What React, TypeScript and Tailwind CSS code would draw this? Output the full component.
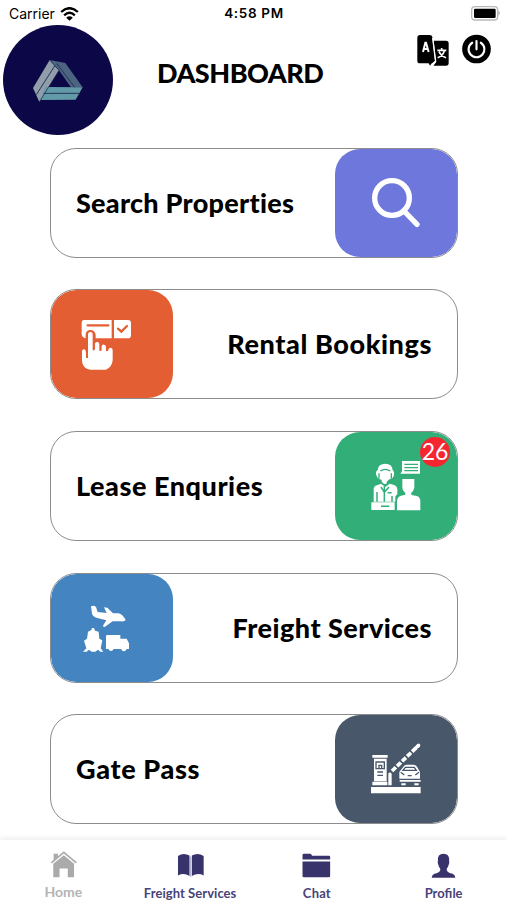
import type { ReactNode } from "react";

function Logo() {
  return (
    <svg viewBox="10 75 330 330" className="mt-[25px] ml-[3px] h-[110px] w-[110px] shrink-0">
      <circle cx="175" cy="240" r="165" fill="#0c0848" />
      <path d="M150 180L100 264L119 306L178 211Z" fill="#929daa" />
      <path d="M150 180L197 189L249 262L214 262L178 211Z" fill="#4c647f" />
      <path d="M138 261L249 262L228 299L121 300Z" fill="#629ba7" />
      <path d="M165 198L110 284M171 190L225 262M132 280L240 280" stroke="#26365c" strokeWidth="3" fill="none" />
      <path d="M178 211L119 306M150 180L178 211" stroke="#1a2350" strokeWidth="2" fill="none" />
    </svg>
  );
}

function WifiIcon() {
  return (
    <svg viewBox="0 0 56 42" className="h-[14px] w-[19px]">
      <g fill="none" stroke="#000" strokeWidth="7">
        <path d="M3 15Q28-8 53 15" />
        <path d="M12 25Q28 10 44 25" />
      </g>
      <path d="M28 41L18 32Q28 24 38 32Z" />
    </svg>
  );
}

function BatteryIcon() {
  return (
    <svg viewBox="0 0 90 44" className="h-[14.7px] w-[30px]">
      <path d="M82 14Q91 20 82 29Z" fill="#aaa" />
      <rect x="2" y="2" width="78" height="40" rx="10" fill="#fff" stroke="#b9b9b9" strokeWidth="4" />
      <rect x="9" y="8" width="65" height="28" rx="4" />
    </svg>
  );
}

function TranslateIcon() {
  return (
    <svg viewBox="50 100 96 96" className="h-8 w-8">
      <path d="M59 103H88Q95 103 96 110L104 180L95 188H59Q51 188 51 180V111Q51 103 59 103Z" />
      <path d="M100 120H137Q145 120 145 128V187Q145 195 137 195H99L107 184Z" />
      <path d="M83 184L97 183L89 195Z" />
      <path d="M97 112L106 183L96 195" fill="none" stroke="#fff" strokeWidth="4" />
      <path d="M68 154L75 126H77L85 154M70 145H82" fill="none" stroke="#fff" strokeWidth="6" />
      <path d="M111 149H138M124 142V149M132 151Q127 166 112 171M116 153Q122 166 137 171" fill="none" stroke="#fff" strokeWidth="5" />
    </svg>
  );
}

function PowerIcon() {
  return (
    <svg viewBox="186 104 88 90" className="h-[30px] w-[29px]">
      <circle cx="230" cy="149" r="43.5" />
      <path d="M230 125V150M217 130A24 24 0 1 0 243 130" fill="none" stroke="#fff" strokeWidth="6.5" strokeLinecap="round" />
    </svg>
  );
}

function SearchIcon() {
  return (
    <svg viewBox="45 27 366 324" className="h-full w-full">
      <g fill="none" stroke="#fff" strokeLinecap="round">
        <circle cx="216" cy="174" r="52" strokeWidth="16" />
        <path d="M252 213L291 253" strokeWidth="16" />
      </g>
    </svg>
  );
}

function BookingIcon() {
  return (
    <svg viewBox="33 26 366 324" className="h-full w-full">
      <g fill="#fff">
        <path d="M132 116H215V171H167V160Q164 146 151 146Q138 146 137 160V171Q125 168 125 158V126Q125 116 132 116Z" />
        <path d="M222 116H264Q273 116 273 126V160Q273 171 264 171H222Z" />
        <path d="M144 160Q144 152 151 152Q158 152 158 160V207Q164 209 165 202V187Q166 181 173 182Q178 183 178 189V208Q184 211 185 205V195Q186 189 192 190Q198 191 198 197V209Q204 211 205 205Q207 198 212 199Q218 200 218 207V237Q216 258 198 265H151Q127 261 126 238V210Q127 202 133 204Q138 206 138 214V230H144Z" />
      </g>
      <path d="M143 132H205M234 142L244 151L261 134" fill="none" stroke="#e35f33" strokeWidth="7" strokeLinecap="round" />
    </svg>
  );
}

function EnquiryIcon() {
  return (
    <svg viewBox="45 25 366 324" className="h-full w-full">
      <g fill="#fff">
        <path d="M246 112H300V150H241L246 143Z" />
        <path d="M168 151Q166 144 173 139Q175 120 196 120Q216 120 218 139Q225 145 221 157Q218 166 208 167L200 174V180L192 181L185 174V168Q171 167 168 151Z" />
        <path d="M161 234V196Q162 186 173 184L183 180L196 190L209 180L222 184Q232 188 232 198V212L226 218V234Z" />
        <path d="M154 236H224V259H154Z" />
        <path d="M247 166H283V192Q280 204 274 207V214L291 217Q301 221 301 232V260H231V232Q232 219 243 216L256 213V207Q247 201 247 190Z" />
      </g>
      <g fill="none" stroke="#32ae78" strokeWidth="4.5">
        <path d="M253 122H294M253 132H294M253 141H294" strokeWidth="3.5" />
        <path d="M177 165V149M214 149V165M181 142Q195 132 211 142" strokeWidth="4" />
        <path d="M171 234V205M193 188V234M183 190L193 206L207 190M216 234V217M203 207H215" />
        <path d="M183 248H208" />
      </g>
    </svg>
  );
}

function FreightIcon() {
  return (
    <svg viewBox="33 24 366 324" className="h-full w-full">
      <g fill="#fff">
        <path d="M153 121Q162 117 168 123L173 138L200 141L192 124L202 125L219 142H235Q249 145 257 162Q254 167 242 166H218L194 183L188 181L199 163L172 156Q158 151 156 143Z" />
        <path d="M154 192L156 186H162L165 194L176 197L178 218L187 223L182 247L190 257H181L174 251L166 257H155L147 251L140 257H129L139 247L132 224L141 218L144 197Z" />
        <path d="M202 207H241V218H260L267 232V249H260Q256 258 248 255L243 249H221Q216 258 208 253L205 249H198V211Q198 207 202 207Z" />
      </g>
    </svg>
  );
}

function GateIcon() {
  return (
    <svg viewBox="45 23 366 324" className="h-full w-full">
      <g fill="#fff">
        <path d="M157 143H203V151H157ZM162 154H200V222H162ZM157 223H202V234H157ZM153 239H302V258H153ZM205 198Q210 193 215 199V234H205Z" />
        <path d="M249 180Q252 172 260 172H281Q289 172 292 180L300 194V214H238V194ZM239 218H302V223H239ZM244 228H257V234H244ZM283 228H296V234H283Z" />
      </g>
      <path d="M216 191L296 114" stroke="#fff" strokeWidth="11" strokeDasharray="16 5" strokeLinecap="butt" />
      <path d="M288 121L296 114" stroke="#fff" strokeWidth="10" strokeLinecap="round" />
      <g fill="none" stroke="#48586a" strokeWidth="4">
        <path d="M168 164H193V184H168ZM177 184V174H185V184M172 194H189M172 204H189" />
        <path d="M256 180H283L289 189H249ZM242 195L253 203M297 195L286 203M263 205H275" />
      </g>
    </svg>
  );
}

type Service = {
  title: string;
  color: string;
  tracking: string;
  icon: ReactNode;
  side: "left" | "right";
  badge?: number;
};

const services: Service[] = [
  { title: "Search Properties", color: "bg-[#6d77dc]", tracking: "tracking-[0.26px]", icon: <SearchIcon />, side: "right" },
  { title: "Rental Bookings", color: "bg-[#e35f33]", tracking: "tracking-[0.6px]", icon: <BookingIcon />, side: "left" },
  { title: "Lease Enquries", color: "bg-[#32ae78]", tracking: "tracking-[0.55px]", icon: <EnquiryIcon />, side: "right", badge: 26 },
  { title: "Freight Services", color: "bg-[#4485c1]", tracking: "tracking-[0.48px]", icon: <FreightIcon />, side: "left" },
  { title: "Gate Pass", color: "bg-[#48586a]", tracking: "tracking-[0.65px]", icon: <GateIcon />, side: "right" },
];

function ServiceCard({ title, color, tracking, icon, side, badge }: Service) {
  return (
    <button
      className={`relative flex h-[110px] w-[408px] shrink-0 items-center justify-between overflow-hidden rounded-[26px] border border-[#8c8c8c] bg-white ${side === "left" ? "flex-row-reverse" : ""}`}
    >
      <span className={`px-[25px] text-[27px] leading-8 font-black whitespace-nowrap ${tracking}`}>{title}</span>
      <span className={`block h-[108px] w-[122px] shrink-0 rounded-[25px] ${color}`}>{icon}</span>
      {badge !== undefined && (
        <span className="absolute top-[5px] right-[7px] flex h-[30px] w-[30px] items-center justify-center rounded-full bg-[#f62631] text-[23px] leading-none text-white">
          {badge}
        </span>
      )}
    </button>
  );
}

function HomeIcon() {
  return (
    <svg viewBox="150 60 82 82" className="h-[27px] w-[27px]" fill="#aaa">
      <path d="M161 68H174V77L161 90Z" />
      <path d="M154 96L192 64L230 96" fill="none" stroke="#aaa" strokeWidth="5" />
      <path d="M192 73L223 99V140H204V113H179V140H160V99Z" />
    </svg>
  );
}

function BookIcon() {
  return (
    <svg viewBox="530 70 82 74" className="h-[25px] w-[27px]" fill="#38336b">
      <path d="M533 78Q550 67 568 77V139Q551 127 533 137ZM575 77Q593 67 611 78V137Q593 127 575 139Z" />
      <path d="M571.500 80V142" stroke="#a9a6c5" strokeWidth="3" />
    </svg>
  );
}

function FolderIcon() {
  return (
    <svg viewBox="137 70 87 76" className="h-[25px] w-[29px]" fill="#38336b">
      <path d="M138 75Q138 72 142 72H161Q165 72 167 78H218Q222 78 222 82V90H138ZM138 96H222V140Q222 144 218 144H142Q138 144 138 140Z" />
    </svg>
  );
}

function ProfileIcon() {
  return (
    <svg viewBox="524 70 74 76" className="h-[25px] w-[25px]" fill="#38336b">
      <path d="M544 94Q542 72 561 72Q580 72 578 94Q580 97 577 105Q575 114 571 117V123Q574 130 589 133Q597 137 597 145H525Q525 137 533 133Q548 130 551 123V117Q547 114 545 105Q542 98 544 94Z" />
    </svg>
  );
}

const tabs = [
  { label: "Home", icon: <HomeIcon />, style: "text-[#b4b4b4] text-[14px] pt-[11px] gap-[5px]" },
  { label: "Freight Services", icon: <BookIcon />, style: "text-[#48437a] text-[13px] pt-[13px] gap-[6px] tracking-[0.05px]" },
  { label: "Chat", icon: <FolderIcon />, style: "text-[#48437a] text-[13px] pt-[13px] gap-[6px] tracking-[0.2px]" },
  { label: "Profile", icon: <ProfileIcon />, style: "text-[#48437a] text-[13px] pt-[13px] gap-[6px]" },
];

export default function App() {
  return (
    <div className="flex h-[900px] w-[507px] flex-col overflow-hidden bg-white font-['Lato',sans-serif] text-black">
      <header className="relative flex h-[147.6px] shrink-0 items-start">
        <div className="absolute inset-x-0 top-0 flex h-[27px] items-center justify-between pr-[6px] pl-[9px] font-['Inter',sans-serif] text-[14px]">
          <span className="flex w-[118px] items-center gap-[5px]">
            Carrier <WifiIcon />
          </span>
          <span className="text-[13.5px] font-semibold tracking-[0.65px]">4:58 PM</span>
          <span className="flex w-[120px] justify-end">
            <BatteryIcon />
          </span>
        </div>
        <Logo />
        <h1 className="mt-[57px] ml-[44px] w-[200px] text-[27px] leading-8 font-black tracking-[-0.5px]">DASHBOARD</h1>
        <div className="mt-[34px] ml-[60px] flex items-start gap-[13px]">
          <TranslateIcon />
          <PowerIcon />
        </div>
      </header>
      <main className="flex min-h-0 flex-1 flex-col items-center gap-[31.7px] pl-[1px]">
        {services.map((service) => (
          <ServiceCard key={service.title} {...service} />
        ))}
      </main>
      <nav className="grid h-[60px] shrink-0 grid-cols-4 bg-white shadow-[0_-2px_5px_rgba(0,0,0,0.07)]">
        {tabs.map((tab) => (
          <button key={tab.label} className={`flex flex-col items-center leading-[18px] font-bold whitespace-nowrap ${tab.style}`}>
            {tab.icon}
            <span>{tab.label}</span>
          </button>
        ))}
      </nav>
    </div>
  );
}
